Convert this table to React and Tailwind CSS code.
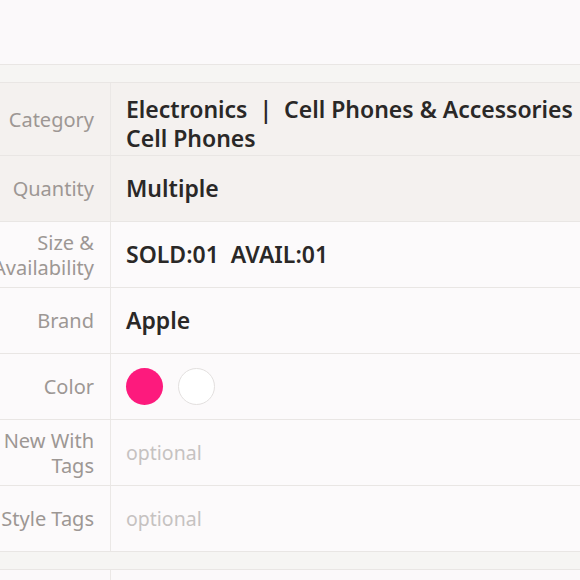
import React from "react";

const rows = [
  { label: "Category", lines: ["Electronics  |  Cell Phones & Accessories", "Cell Phones"], tint: true, tall: true },
  { label: "Quantity", lines: ["Multiple"], tint: true },
  { label: ["Size &", "Availability"], lines: ["SOLD:01  AVAIL:01"] },
  { label: "Brand", lines: ["Apple"] },
  { label: "Color", colors: ["#fd1a7d", "#ffffff"] },
  { label: ["New With", "Tags"], placeholder: "optional" },
  { label: "Style Tags", placeholder: "optional" },
];

function Row({ row }) {
  const label = Array.isArray(row.label) ? row.label : [row.label];
  return (
    <div
      className={`flex border-b border-[#e9e6e4] ${row.tint ? "bg-[#f4f1ef]" : "bg-[#fcfafb]"} ${
        row.tall ? "h-[73px]" : "h-[66px]"
      }`}
    >
      <div className="w-[111px] shrink-0 flex items-center justify-end pr-4 border-r border-[#ebe8e6]">
        <div className="flex flex-col items-end text-[20px] leading-[25px] text-[#9d9794] whitespace-nowrap">
          {label.map((l) => (
            <span key={l}>{l}</span>
          ))}
        </div>
      </div>
      <div className={`flex-1 flex items-center pl-[15px] pr-1 min-w-0 ${row.tall ? "pt-[9px]" : ""}`}>
        {row.lines && (
          <div className="flex flex-col text-[23px] leading-[29px] font-semibold text-[#2a2827] whitespace-pre">
            {row.lines.map((l) => (
              <span key={l}>{l}</span>
            ))}
          </div>
        )}
        {row.placeholder && <span className="text-[19.5px] text-[#c6c2c1]">{row.placeholder}</span>}
        {row.colors && (
          <div className="flex gap-[15px]">
            {row.colors.map((c) => (
              <div
                key={c}
                className={`w-[37px] h-[37px] rounded-full ${c === "#ffffff" ? "bg-white border border-[#e3e0df]" : "bg-[#fd1a7d]"}`}
              />
            ))}
          </div>
        )}
      </div>
    </div>
  );
}

export default function App() {
  return (
    <div className="w-[580px] h-[580px] overflow-hidden bg-[#fbf9fa]" style={{ fontFamily: "'Noto Sans', sans-serif" }}>
      <div className="h-[65px] border-b border-[#e9e6e4]" />
      <div className="h-[18px] bg-[#f6f5f3] border-b border-[#e9e6e4]" />
      {rows.map((r) => (
        <Row key={String(r.label)} row={r} />
      ))}
      <div className="h-[18px] bg-[#f6f5f3] border-b border-[#e9e6e4]" />
      <div className="flex h-[40px]">
        <div className="w-[111px] border-r border-[#ebe8e6]" />
      </div>
    </div>
  );
}
